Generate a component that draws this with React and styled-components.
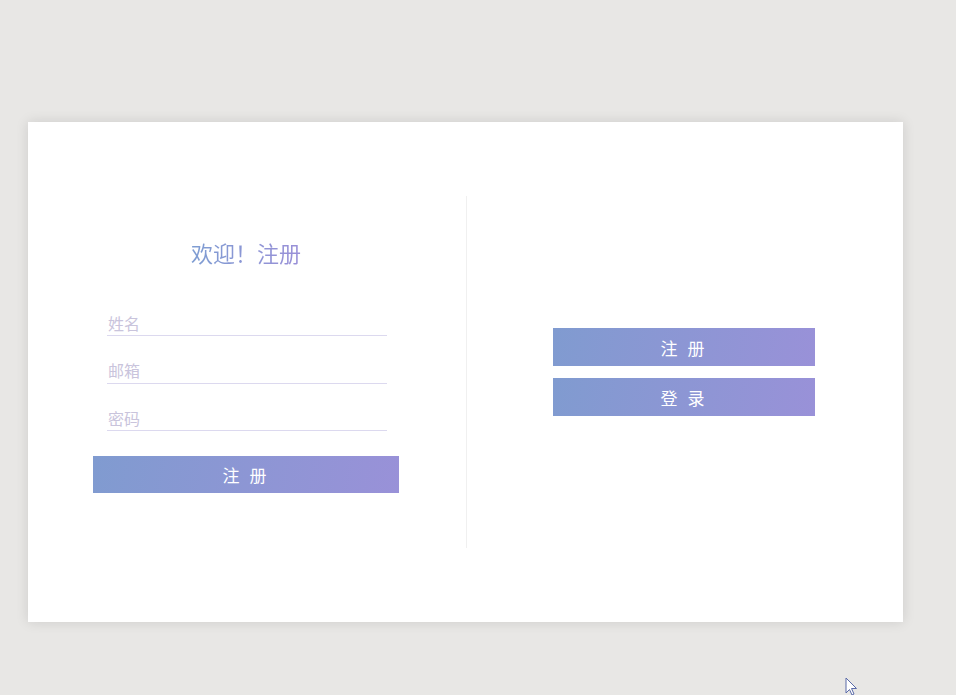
import React from "react";
import styled, { createGlobalStyle } from "styled-components";

const Global = createGlobalStyle`
  html, body { margin: 0; padding: 0; background: #e8e7e5; }
  body { font-family: "Noto Sans CJK SC", "Noto Sans", sans-serif; }
  * { box-sizing: border-box; }
`;

const Page = styled.div`
  width: 956px;
  height: 695px;
  padding: 122px 0 0 28px;
  position: relative;
  overflow: hidden;
`;

const Card = styled.div`
  width: 875px;
  height: 500px;
  background: #fff;
  box-shadow: 0 0 12px rgba(0, 0, 0, 0.12);
  display: flex;
  align-items: center;
`;

const Panel = styled.div`
  flex: 0 0 ${(p) => p.$w}px;
  height: 352px;
  display: flex;
  flex-direction: column;
  align-items: center;
  justify-content: center;
  ${(p) => (p.$divider ? "border-right: 1px solid #f0f0f0;" : "padding-right: 2px;")}
`;

const Form = styled.form`
  display: flex;
  flex-direction: column;
  align-items: center;
  width: 306px;
  margin-bottom: 14px;
  margin-right: 2px;
`;

const Title = styled.h2`
  margin: 0 0 43px;
  font-size: 22px;
  font-weight: 400;
  line-height: 30px;
  background: linear-gradient(90deg, #7e9dd2, #9a90d8);
  -webkit-background-clip: text;
  background-clip: text;
  color: transparent;
`;

const Input = styled.input`
  width: 280px;
  height: 26px;
  margin: 0 0 21.5px 2px;
  border: none;
  border-bottom: 1px solid #dcd9ef;
  outline: none;
  padding: 0 0 0 1px;
  font-family: inherit;
  font-size: 16px;
  color: #666;
  background: transparent;
  &::placeholder { color: #c9c4dc; }
  &:last-of-type { margin-bottom: 25px; }
`;

const Button = styled.button`
  width: ${(p) => p.$w}px;
  height: ${(p) => p.$h}px;
  border: none;
  padding: 0;
  margin: 0;
  background: linear-gradient(100deg, #809bd0, #9991d8);
  color: #fff;
  font-family: inherit;
  font-size: 17px;
  letter-spacing: 3px;
  cursor: pointer;
  & + & { margin-top: 12px; }
`;

const Cursor = styled.svg`
  position: absolute;
  left: 845px;
  top: 677px;
`;

export default function App() {
  return (
    <Page>
      <Global />
      <Card>
        <Panel $w={439} $divider>
          <Form onSubmit={(e) => e.preventDefault()}>
            <Title>欢迎！注册</Title>
            <Input placeholder="姓名" />
            <Input placeholder="邮箱" />
            <Input placeholder="密码" type="password" />
            <Button $w={306} $h={37}>注 册</Button>
          </Form>
        </Panel>
        <Panel $w={436}>
          <Button $w={262} $h={38}>注 册</Button>
          <Button $w={262} $h={38}>登 录</Button>
        </Panel>
      </Card>
      <Cursor width="14" height="20" viewBox="0 0 14 20">
        <path d="M1 1 L1 16 L4.5 12.5 L7 18 L9 17 L6.5 11.5 L11.5 11.5 Z" fill="#fff" stroke="#5a6aa8" strokeWidth="1" />
      </Cursor>
    </Page>
  );
}
